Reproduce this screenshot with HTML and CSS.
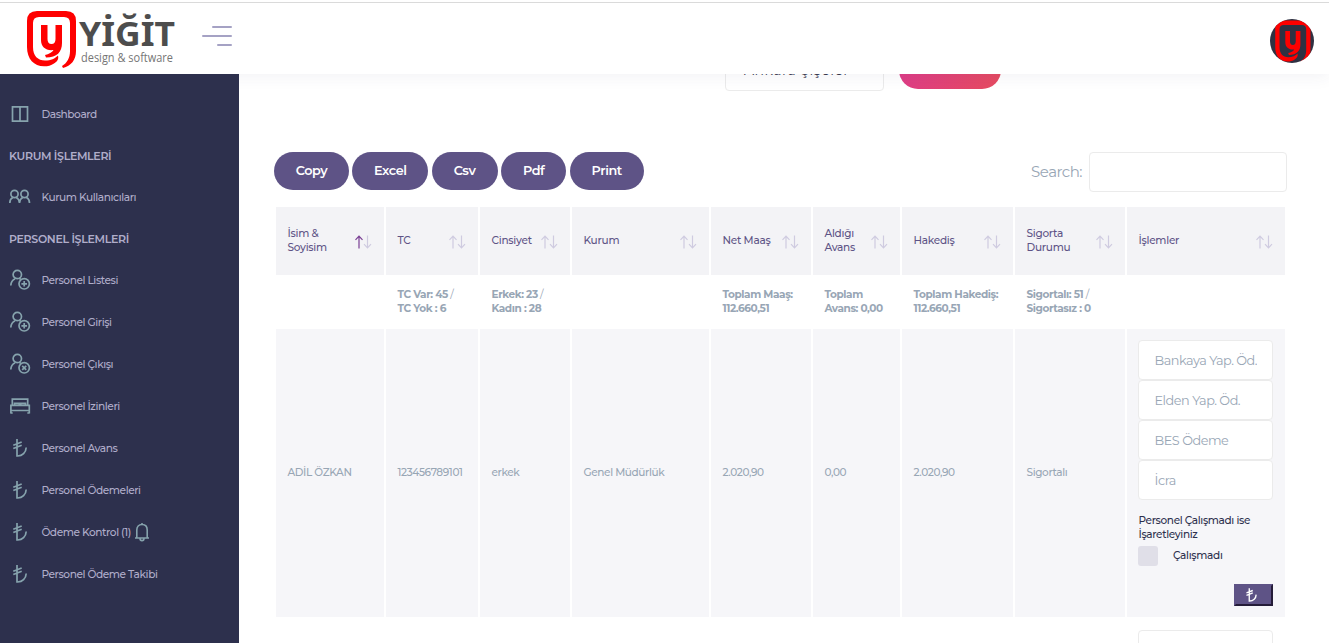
FILE: index.html
```html
<!DOCTYPE html>
<html lang="tr">
<head>
<meta charset="utf-8">
<title>Yiğit Personel</title>
<link rel="stylesheet" href="styles.css">
</head>
<body>
<svg width="0" height="0" class="defs">
  <defs>
    <symbol id="lira" viewBox="0 0 20 20"><path d="M7 1v17c5.500.3 9-3.600 9.200-8.500M3.300 7.200l8.400-3.200M3.300 10.500l8.400-3.200"/></symbol>
    <symbol id="user" viewBox="0 0 22 22"><circle cx="8.300" cy="5.500" r="4.200"/><path d="M1.800 16.500c.2-3.500 1.700-5.600 4.300-6.800M10.200 9.300l1.500.9"/><circle cx="15.200" cy="14.800" r="5.200"/></symbol>
    <symbol id="sort" viewBox="0 0 17 14"><path class="up" d="M4 13.500V1.500M.5 4.800 4 1.200l3.500 3.600"/><path class="down" d="M12.500.5v12M9 9.200l3.500 3.600L16 9.200"/></symbol>
    <g id="mark" fill="#fe0000">
      <path d="M11 1h29q10 0 10 10v30c0 9-5 15-13 17l-1-2c5-3 8-8 8-15V13q0-6-6-6H13q-6 0-6 6v24c0 9 5 13.500 12 13.500 6 0 10-2 13-5 1 4-1 6-4 8-3 2-6 2.800-10 2.800C8 56.300 1 49 1 37V11Q1 1 11 1z"/>
      <path d="M15 15h6.500v14q0 5 4 5 4 0 4-5V15H36v18c0 9-5 14.500-16 14.500l-1-2.500c4-1 7-2.500 8.500-5C20 41 15 37 15 30z"/>
    </g>
  </defs>
</svg>
<header class="topbar">
  <svg class="logo" width="150" height="62" viewBox="0 0 150 62">
    <use href="#mark"/>
    <text class="logo-name" x="53" y="36.300" textLength="96" lengthAdjust="spacingAndGlyphs">YİĞİT</text>
    <text class="logo-sub" x="55" y="52" textLength="92" lengthAdjust="spacingAndGlyphs">design &amp; software</text>
  </svg>
  <span class="burger"><i></i><i></i><i></i></span>
  <svg class="avatar" width="44" height="44" viewBox="0 0 44 44">
    <defs><clipPath id="round"><circle cx="22" cy="22" r="22"/></clipPath></defs>
    <g clip-path="url(#round)">
      <rect width="44" height="44" fill="#2f3142"/>
      <use href="#mark" transform="translate(4.500 .8) scale(.72 .74)"/>
    </g>
  </svg>
</header>
<div class="layout">
  <nav class="sidebar">
    <a class="item"><svg class="ico" width="22" height="22" viewBox="0 0 22 22"><path d="M3.500 3.800h15v14.400h-15zM11 4v14"/></svg><span>Dashboard</span></a>
    <h4 class="group">KURUM İŞLEMLERİ</h4>
    <a class="item"><svg class="ico" width="22" height="22" viewBox="0 0 22 22"><circle cx="5.500" cy="8" r="3.600"/><circle cx="15.500" cy="8" r="3.600"/><path d="M.8 17c0-3 1-4.500 3-5.500M7.300 11.500c2 1 3 2.500 3.200 5.500.2-3 1.200-4.500 3.200-5.500M17.500 11.500c2 1 3 2.500 3 5.500"/></svg><span>Kurum Kullanıcıları</span></a>
    <h4 class="group">PERSONEL İŞLEMLERİ</h4>
    <a class="item"><svg class="ico" width="22" height="22"><use href="#user"/><path d="M15.200 12v5.600M12.400 14.800H18"/></svg><span>Personel Listesi</span></a>
    <a class="item"><svg class="ico" width="22" height="22"><use href="#user"/><path d="M15.200 12v5.600M12.400 14.800H18"/></svg><span>Personel Girişi</span></a>
    <a class="item"><svg class="ico" width="22" height="22"><use href="#user"/><path d="m13.200 12.800 4 4M17.200 12.800l-4 4"/></svg><span>Personel Çıkışı</span></a>
    <a class="item"><svg class="ico" width="22" height="22" viewBox="0 0 22 22"><path d="M3.300 10V4.200h15.400V10M1.900 18.500v-8.200h18.400v8.200M1.700 15.500h18.600M5.500 10V8.300h4.800V10M11.700 10V8.300h4.800V10M1.700 18h2M18.300 18h2"/></svg><span>Personel İzinleri</span></a>
    <a class="item"><svg class="ico" width="22" height="20"><use href="#lira"/></svg><span>Personel Avans</span></a>
    <a class="item"><svg class="ico" width="22" height="20"><use href="#lira"/></svg><span>Personel Ödemeleri</span></a>
    <a class="item"><svg class="ico" width="22" height="20"><use href="#lira"/></svg><span>Ödeme Kontrol (1)</span><svg class="bell" width="16" height="20" viewBox="0 0 16 20"><path d="M1 16h14M2.800 16V8c0-3.500 2-5.500 5.200-5.500s5.200 2 5.200 5.500v8M8 2.500V1M6 16.500c0 2.800 4 2.800 4 0"/></svg></a>
    <a class="item"><svg class="ico" width="22" height="20"><use href="#lira"/></svg><span>Personel Ödeme Takibi</span></a>
  </nav>
  <main class="content">
    <div class="filters"><div class="select">Ankara Şişeler</div><div class="submit"></div></div>
    <div class="tools">
      <div class="buttons">
        <button class="pill copy">Copy</button><button class="pill excel">Excel</button><button class="pill csv">Csv</button><button class="pill pdf">Pdf</button><button class="pill print">Print</button>
      </div>
      <label class="search"><span>Search:</span><input type="text"></label>
    </div>
    <table class="grid">
      <colgroup><col class="c1"><col class="c2"><col class="c3"><col class="c4"><col class="c5"><col class="c6"><col class="c7"><col class="c8"><col class="c9"></colgroup>
      <tr class="head">
        <th><div><span>İsim &amp;<br>Soyisim</span><svg class="sort asc" width="17" height="14"><use href="#sort"/></svg></div></th>
        <th><div><span>TC</span><svg class="sort" width="17" height="14"><use href="#sort"/></svg></div></th>
        <th><div><span>Cinsiyet</span><svg class="sort" width="17" height="14"><use href="#sort"/></svg></div></th>
        <th><div><span>Kurum</span><svg class="sort" width="17" height="14"><use href="#sort"/></svg></div></th>
        <th><div><span>Net Maaş</span><svg class="sort" width="17" height="14"><use href="#sort"/></svg></div></th>
        <th><div><span>Aldığı<br>Avans</span><svg class="sort" width="17" height="14"><use href="#sort"/></svg></div></th>
        <th><div><span>Hakediş</span><svg class="sort" width="17" height="14"><use href="#sort"/></svg></div></th>
        <th><div><span>Sigorta<br>Durumu</span><svg class="sort" width="17" height="14"><use href="#sort"/></svg></div></th>
        <th><div><span>İşlemler</span><svg class="sort" width="17" height="14"><use href="#sort"/></svg></div></th>
      </tr>
      <tr class="totals">
        <td></td>
        <td><b>TC Var: 45</b> /<br><b>TC Yok : 6</b></td>
        <td><b>Erkek: 23</b> /<br><b>Kadın : 28</b></td>
        <td></td>
        <td><b>Toplam Maaş:<br>112.660,51</b></td>
        <td><b>Toplam<br>Avans: 0,00</b></td>
        <td><b>Toplam Hakediş:<br>112.660,51</b></td>
        <td><b>Sigortalı: 51</b> /<br><b>Sigortasız : 0</b></td>
        <td></td>
      </tr>
      <tr class="person">
        <td>ADİL ÖZKAN</td><td>123456789101</td><td>erkek</td><td>Genel Müdürlük</td><td>2.020,90</td><td>0,00</td><td>2.020,90</td><td>Sigortalı</td>
        <td class="ops">
          <input class="field" placeholder="Bankaya Yap. Öd."><input class="field" placeholder="Elden Yap. Öd."><input class="field" placeholder="BES Ödeme"><input class="field" placeholder="İcra">
          <p class="note">Personel Çalışmadı ise<br>İşaretleyiniz</p>
          <label class="check"><i></i><span>Çalışmadı</span></label>
          <div class="pay"><button><svg width="15" height="16"><use href="#lira"/></svg></button></div>
        </td>
      </tr>
      <tr class="next">
        <td></td><td></td><td></td><td></td><td></td><td></td><td></td><td></td>
        <td class="ops"><input class="field"></td>
      </tr>
    </table>
  </main>
</div>
</body>
</html>
```
FILE: styles.css
```css
* { box-sizing: border-box; }
body { margin: 0; height: 643px; overflow: hidden; background: #fff; font-family: Montserrat, Inter, sans-serif; font-size: 10.5px; color: #98a6b5; }
.defs { display: block; height: 0; }
.topbar { display: flex; height: 74px; padding: 0 15px 0 26px; align-items: flex-start; border-top: 2px solid #fff; box-shadow: 0 2px 16px rgba(50, 50, 93, .07); position: relative; z-index: 2; background: linear-gradient(#dadada 1px, #fff 1px); }
.logo { margin-top: 8px; overflow: visible; }
.logo-name { font: 700 34px "Noto Sans", sans-serif; fill: #4d4d4d; }
.logo-sub { font: 400 12.500px "Open Sans", sans-serif; fill: #757575; }
.burger { display: flex; flex-direction: column; align-items: flex-end; gap: 7px; width: 30px; margin: 24px auto 0 26px; }
.burger i { height: 2px; width: 20px; background: #a5a2c4; border-radius: 1px; }
.burger i:nth-child(2) { width: 30px; }
.burger i:nth-child(3) { width: 15px; }
.avatar { margin-top: 17px; }
.layout { display: flex; height: 569px; }
.sidebar { position: relative; z-index: 3; width: 239px; flex: none; padding-top: 19px; background: #2d304d; color: #b0adca; }
.item { display: flex; align-items: center; height: 42px; padding-left: 9px; font-size: 10.600px; font-weight: 500; letter-spacing: -.42px; }
.ico { margin-right: 10.400px; fill: none; stroke: #86a3ad; stroke-width: 1.700; }
.bell { margin-left: 3px; fill: none; stroke: #86a3ad; stroke-width: 1.600; }
.group { display: flex; align-items: center; height: 41px; margin: 0; padding-left: 9px; font-size: 11px; font-weight: 600; letter-spacing: -.33px; }
.content { flex: 1; min-width: 0; overflow: hidden; padding: 0 42px 0 35px; }
.filters { display: flex; gap: 15px; height: 40px; margin: -23px 0 61px 451px; }
.select { width: 159px; height: 40px; border: 1px solid #ebebeb; border-radius: 4px; padding: 0 18px; font-size: 14px; line-height: 36px; letter-spacing: .5px; white-space: nowrap; color: #39394f; }
.submit { width: 102px; height: 38px; border-radius: 19px; background: linear-gradient(120deg, #dd3a8c, #e64c5f); }
.tools { display: flex; justify-content: space-between; height: 40px; }
.buttons { display: flex; gap: 3.3px; }
.pill { height: 38px; padding: 0 0 2px; border: 0; border-radius: 19px; background: #5e5386; color: #fff; font: 600 12.800px Montserrat, Inter, sans-serif; letter-spacing: -.4px; }
.copy { width: 75px; }
.excel { width: 76px; }
.csv { width: 66px; }
.pdf { width: 65.500px; }
.print { width: 74px; }
.search { display: flex; align-items: center; gap: 7px; font-size: 15px; font-weight: 400; letter-spacing: -.5px; }
.search span { padding-bottom: 1px; }
.search input { width: 198px; height: 40px; border: 1px solid #ebebeb; border-radius: 4px; }
.grid { table-layout: fixed; width: 1013px; margin-top: 13px; border-spacing: 2px; line-height: 14px; }
.c1 { width: 108px; } .c2 { width: 92px; } .c3 { width: 90px; } .c4 { width: 137px; } .c5 { width: 100px; } .c6 { width: 87px; } .c7 { width: 111px; } .c8 { width: 110px; } .c9 { width: 158px; }
.grid th, .grid td { padding: 0 0 0 11.500px; text-align: left; white-space: nowrap; }
.head { height: 68px; }
.head th { background: #f3f3f6; color: #5e5386; font-weight: 500; letter-spacing: -.25px; }
.head div { display: flex; align-items: center; justify-content: space-between; padding-right: 12.500px; }
.sort { fill: none; stroke: #cfcbe0; stroke-width: 1.200; margin-top: 1px; flex: none; }
.asc { stroke: #7a3f94; }
.down { stroke: #cfcbe0; }
.totals { height: 50px; letter-spacing: -.4px; }
.grid .totals td { height: 50px; }
.person { height: 288px; font-weight: 500; letter-spacing: -.37px; }
.person td { background: #f6f6f9; }
.grid .ops { padding: 11px 12px 0 11px; vertical-align: top; }
.field { display: block; width: 100%; height: 40px; padding: 0 15.500px; border: 1px solid #ebebeb; border-radius: 4px; background: #fff; font: 400 12.800px Montserrat, Inter, sans-serif; letter-spacing: -.45px; }
.field::placeholder { color: #98a6b5; }
.note { margin: 14px 0 4px .5px; color: #2d304d; letter-spacing: -.35px; }
.check { display: flex; align-items: center; gap: 15px; color: #2d304d; letter-spacing: -.3px; }
.check i { width: 20px; height: 20px; border-radius: 3px; background: #e0dfe8; }
.pay { display: flex; justify-content: flex-end; margin-top: 18px; }
.pay button { display: flex; justify-content: center; align-items: center; width: 39px; height: 22px; padding: 0 5px 0 0; border: 2px solid; border-color: #5e5386 #241c38 #241c38 #5e5386; background: #5e5386; }
.pay svg { fill: none; stroke: #fff; stroke-width: 1.800; }
```
